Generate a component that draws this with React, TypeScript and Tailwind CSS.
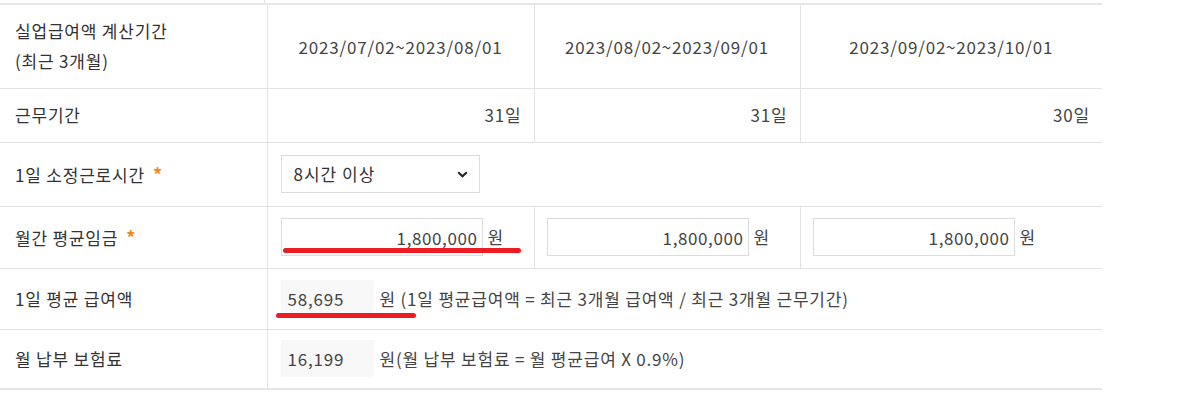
import type { ReactNode } from 'react';

const FONT = "font-['Noto_Sans_CJK_KR','Noto_Sans',sans-serif] tracking-[0.8px]";

const PERIODS = [
    { range: '2023/07/02~2023/08/01', days: '31일' },
    { range: '2023/08/02~2023/09/01', days: '31일' },
    { range: '2023/09/02~2023/10/01', days: '30일' },
];

function Label({ children, required }: { children: ReactNode; required?: boolean })
{
    return (
        <td className="w-[267px] border-r border-[#e3e3e3] pl-[15px] align-middle text-[17px] leading-[30px] text-[#333]">
            {children}
            {required && <span className="ml-[8px] text-[18px] font-bold text-[#f08a1c]">*</span>}
        </td>
    );
}

function Underline({ className }: { className: string })
{
    return <span className={`pointer-events-none absolute h-[5px] rounded-full bg-[#ed1c24] ${className}`} />;
}

function WageInput({ underline }: { underline?: boolean })
{
    return (
        <div className="relative flex items-center">
            <input
                readOnly
                value="1,800,000"
                className="h-[38px] w-[202px] border border-[#dcdcdc] bg-white pr-[4px] text-right text-[17px] tracking-[0.6px] text-[#444] outline-none"
            />
            <span className="ml-[5px] text-[17px] text-[#444]">원</span>
            {underline && <Underline className="left-[2px] top-[30px] w-[238px]" />}
        </div>
    );
}

export default function App()
{
    return (
        <div className={`${FONT} bg-white w-[1197px] h-[398px] overflow-hidden`}>
            <div className="h-[3px] w-[1102px] flex">
                <div className="w-[265px] border-r border-[#e3e3e3]" />
            </div>
            <table className="w-[1102px] table-fixed border-collapse border-t-2 border-b-2 border-[#e6e6e6]">
                <colgroup>
                    <col className="w-[267px]" />
                    <col className="w-[267px]" />
                    <col className="w-[266px]" />
                    <col className="w-[302px]" />
                </colgroup>
                <tbody>
                    {/* ── 계산기간 ── */}
                    <tr className="h-[84px] border-b border-[#e3e3e3]">
                        <Label>실업급여액 계산기간<br />(최근 3개월)</Label>
                        {PERIODS.map((p, i) => (
                            <td key={i} className={`text-center text-[17px] text-[#444] ${i < 2 ? 'border-r border-[#e3e3e3]' : ''}`}>
                                {p.range}
                            </td>
                        ))}
                    </tr>

                    {/* ── 근무기간 ── */}
                    <tr className="h-[54px] border-b border-[#e3e3e3]">
                        <Label>근무기간</Label>
                        {PERIODS.map((p, i) => (
                            <td key={i} className={`pr-[12px] text-right text-[17px] text-[#444] ${i < 2 ? 'border-r border-[#e3e3e3]' : ''}`}>
                                {p.days}
                            </td>
                        ))}
                    </tr>

                    {/* ── 소정근로시간 ── */}
                    <tr className="h-[64px] border-b border-[#e3e3e3]">
                        <Label required>1일 소정근로시간</Label>
                        <td colSpan={3} className="pl-[13px]">
                            <div className="relative w-[199px]">
                                <select
                                    defaultValue="8"
                                    className="h-[38px] w-[199px] appearance-none border border-[#dcdcdc] bg-white pl-[12px] text-[17px] tracking-[1px] text-[#333] outline-none"
                                >
                                    <option value="8">8시간 이상</option>
                                </select>
                                <svg className="pointer-events-none absolute right-[12px] top-[16px]" width="11" height="7" viewBox="0 0 11 7">
                                    <path d="M1.2 1.2 5.5 5.3 9.8 1.2" fill="none" stroke="#222" strokeWidth="2" />
                                </svg>
                            </div>
                        </td>
                    </tr>

                    {/* ── 월간 평균임금 ── */}
                    <tr className="h-[62px] border-b border-[#e3e3e3]">
                        <Label required>월간 평균임금</Label>
                        {PERIODS.map((_, i) => (
                            <td key={i} className={`${i === 0 ? 'pl-[13px]' : 'pl-[12px]'} ${i < 2 ? 'border-r border-[#e3e3e3]' : ''}`}>
                                <WageInput underline={i === 0} />
                            </td>
                        ))}
                    </tr>

                    {/* ── 1일 평균 급여액 ── */}
                    <tr className="h-[61px] border-b border-[#e3e3e3]">
                        <Label>1일 평균 급여액</Label>
                        <td colSpan={3} className="pl-[13px]">
                            <div className="relative flex items-center text-[17px] text-[#444]">
                                <span className="flex h-[37px] w-[93px] items-center bg-[#f8f8f8] pl-[7px]">58,695</span>
                                <span className="ml-[6px]">원 (1일 평균급여액 = 최근 3개월 급여액 / 최근 3개월 근무기간)</span>
                                <Underline className="left-[-5px] top-[33px] w-[140px]" />
                            </div>
                        </td>
                    </tr>

                    {/* ── 월 납부 보험료 ── */}
                    <tr className="h-[60px]">
                        <Label>월 납부 보험료</Label>
                        <td colSpan={3} className="pl-[13px]">
                            <div className="flex items-center text-[17px] text-[#444]">
                                <span className="flex h-[37px] w-[93px] items-center bg-[#f8f8f8] pl-[7px]">16,199</span>
                                <span className="ml-[6px]">원(월 납부 보험료 = 월 평균급여 X 0.9%)</span>
                            </div>
                        </td>
                    </tr>
                </tbody>
            </table>
        </div>
    );
}
